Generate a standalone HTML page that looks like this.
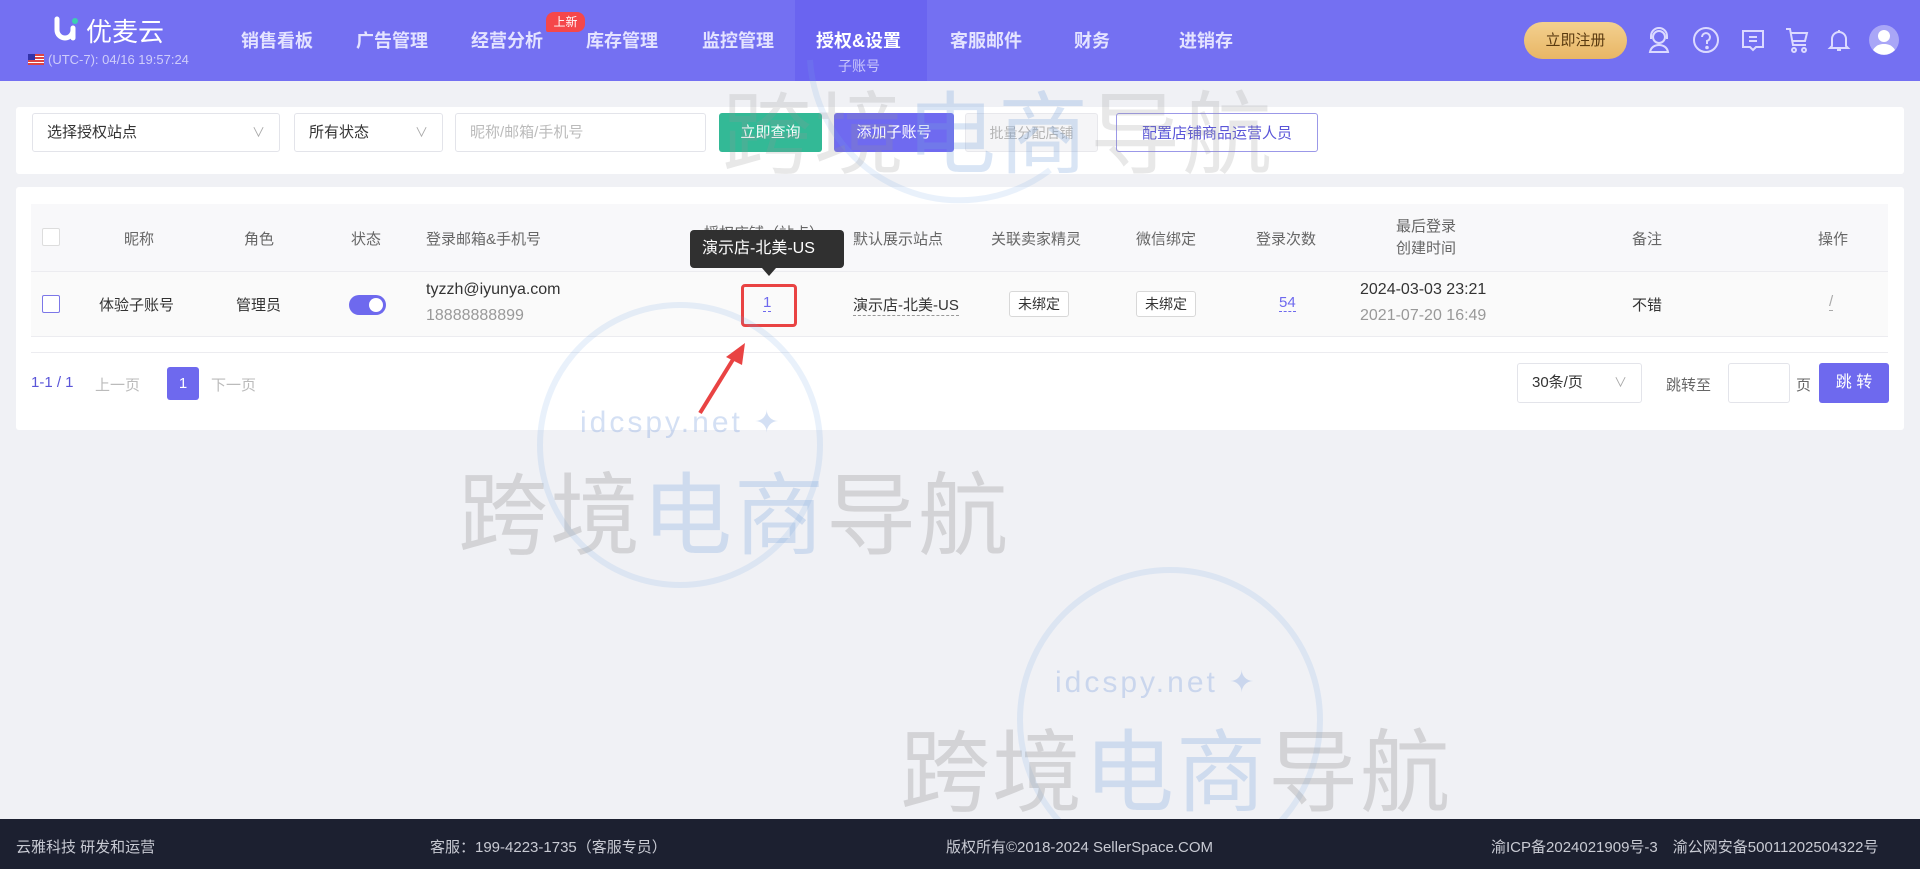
<!DOCTYPE html>
<html><head><meta charset="utf-8"><style>
*{box-sizing:border-box;margin:0;padding:0}
body{width:1920px;height:869px;overflow:hidden;background:#f0f1f5;font-family:"Liberation Sans","Noto Sans CJK SC",sans-serif;position:relative;color:#333}
.abs{position:absolute}
.hdr{left:0;top:0;width:1920px;height:81px;background:#7470f2}
.nav{top:27px;font-size:18px;font-weight:bold;color:#e4e3ff;white-space:nowrap}
.card{background:#fff;border-radius:3px}
.sel{border:1px solid #e3e4ea;border-radius:3px;background:#fff;height:39px;font-size:15px;line-height:37px;padding-left:14px;color:#333}
.sel .ar{position:absolute;right:14px;top:0;color:#aaa;font-size:13px}
.btn{height:39px;border-radius:3px;font-size:15px;line-height:39px;text-align:center;color:#fff}
.th{top:228px;font-size:15px;color:#666;white-space:nowrap}
.td{font-size:15px;color:#333;white-space:nowrap}
.tag{border:1px solid #d8d8d8;border-radius:3px;font-size:14px;line-height:24px;padding:0 8px;background:#fff}
.ft{top:836px;font-size:15px;color:#c8cad3;white-space:nowrap}
.wm{font-size:90px;color:rgba(150,150,150,.32);white-space:nowrap;letter-spacing:2px}
.wm span{color:rgba(120,160,220,.28)}
.ico{top:26px}
</style></head><body>
<div class="abs hdr"></div>
<div class="abs" style="left:795px;top:0;width:132px;height:81px;background:#6a64f0"></div>
<svg class="abs" style="left:53px;top:16px" width="28" height="28" viewBox="0 0 28 28"><path d="M4 3v11a8 8 0 0 0 16 0" stroke="#fff" stroke-width="5" fill="none" stroke-linecap="round"/><circle cx="22" cy="5" r="3" fill="#3ccfb0"/><path d="M20 12v10" stroke="#fff" stroke-width="5" stroke-linecap="round"/></svg>
<div class="abs" style="left:86px;top:12px;font-size:26px;color:#fff">优麦云</div>
<div class="abs" style="left:28px;top:54px;width:16px;height:11px;background:repeating-linear-gradient(#d44 0 2px,#fff 2px 3px)"><div style="width:7px;height:6px;background:#33a"></div></div>
<div class="abs" style="left:48px;top:52px;font-size:13px;color:#cfcdfa">(UTC-7): 04/16 19:57:24</div>
<div class="abs nav" style="left:241px">销售看板</div>
<div class="abs nav" style="left:356px">广告管理</div>
<div class="abs nav" style="left:471px">经营分析</div>
<div class="abs" style="left:546px;top:12px;width:39px;height:20px;background:#f5474a;border-radius:8px 8px 8px 2px;color:#fff;font-size:12px;text-align:center;line-height:20px">上新</div>
<div class="abs nav" style="left:586px">库存管理</div>
<div class="abs nav" style="left:702px">监控管理</div>
<div class="abs nav" style="left:816px;color:#fff">授权&amp;设置</div>
<div class="abs" style="left:838px;top:56px;font-size:14px;color:#c9c6fb">子账号</div>
<div class="abs nav" style="left:950px">客服邮件</div>
<div class="abs nav" style="left:1074px">财务</div>
<div class="abs nav" style="left:1179px">进销存</div>
<div class="abs" style="left:1524px;top:22px;width:103px;height:37px;border-radius:19px;background:linear-gradient(#f3d08f,#e8b665);color:#5a3a10;font-size:15px;text-align:center;line-height:37px">立即注册</div>
<svg class="abs ico" style="left:1645px" width="28" height="28" viewBox="0 0 28 28" fill="none" stroke="#dcdaff" stroke-width="2"><circle cx="14" cy="11" r="6"/><path d="M6 13v-3a8 8 0 0 1 16 0v3M5 26c1-5 5-7 9-7s8 2 9 7z"/></svg>
<svg class="abs ico" style="left:1692px" width="28" height="28" viewBox="0 0 28 28" fill="none" stroke="#dcdaff" stroke-width="2"><circle cx="14" cy="14" r="12"/><path d="M10 11a4 4 0 1 1 5 4v3"/><circle cx="15" cy="21.5" r=".8" fill="#dcdaff"/></svg>
<svg class="abs ico" style="left:1739px" width="28" height="28" viewBox="0 0 28 28" fill="none" stroke="#dcdaff" stroke-width="2"><path d="M4 5h20v16h-7l-3 3-3-3H4z"/><path d="M10 11h8M10 15h8"/></svg>
<svg class="abs ico" style="left:1783px" width="28" height="28" viewBox="0 0 28 28" fill="none" stroke="#dcdaff" stroke-width="2"><path d="M3 3h4l3 16h13M8 7h16l-2 8H9"/><circle cx="11" cy="24" r="2"/><circle cx="21" cy="24" r="2"/></svg>
<svg class="abs ico" style="left:1825px" width="28" height="28" viewBox="0 0 28 28" fill="none" stroke="#dcdaff" stroke-width="2"><path d="M7 20V13a7 7 0 0 1 14 0v7l2 2H5z M12 24h4 M14 4v2"/></svg>
<svg class="abs" style="left:1868px;top:24px" width="32" height="32" viewBox="0 0 32 32"><circle cx="16" cy="16" r="15" fill="#a9a6f7"/><circle cx="16" cy="12" r="6" fill="#fff"/><path d="M5 26c3-5 7-6 11-6s8 1 11 6a15 15 0 0 1-22 0z" fill="#fff"/></svg>

<div class="abs card" style="left:16px;top:107px;width:1888px;height:67px"></div>
<div class="abs sel" style="left:32px;top:113px;width:248px">选择授权站点<span class="ar">∨</span></div>
<div class="abs sel" style="left:294px;top:113px;width:149px">所有状态<span class="ar">∨</span></div>
<div class="abs sel" style="left:455px;top:113px;width:251px;color:#bbb">昵称/邮箱/手机号</div>
<div class="abs btn" style="left:719px;top:113px;width:103px;background:#33b996">立即查询</div>
<div class="abs btn" style="left:834px;top:113px;width:120px;background:#6f6af0">添加子账号</div>
<div class="abs btn" style="left:965px;top:113px;width:133px;background:#f5f5f7;border:1px solid #e8e8ec;color:#b5b5b5;font-size:14px">批量分配店铺</div>
<div class="abs btn" style="left:1116px;top:113px;width:202px;border:1px solid #9b98e8;color:#5a55d8;background:#fff">配置店铺商品运营人员</div>

<div class="abs card" style="left:16px;top:187px;width:1888px;height:243px"></div>
<div class="abs" style="left:31px;top:204px;width:1857px;height:68px;background:#f8f8fa;border-bottom:1px solid #ececf0"></div>
<div class="abs" style="left:31px;top:272px;width:1857px;height:65px;background:#fafafa;border-bottom:1px solid #ececf0"></div>
<div class="abs" style="left:31px;top:352px;width:1857px;height:1px;background:#ececf0"></div>
<div class="abs" style="left:42px;top:228px;width:18px;height:18px;border:1px solid #ddd;border-radius:2px;background:#fff"></div>
<div class="abs th" style="left:124px">昵称</div>
<div class="abs th" style="left:244px">角色</div>
<div class="abs th" style="left:351px">状态</div>
<div class="abs th" style="left:426px">登录邮箱&amp;手机号</div>
<div class="abs th" style="left:704px;top:222px">授权店铺（站点）</div>
<div class="abs th" style="left:853px">默认展示站点</div>
<div class="abs th" style="left:991px">关联卖家精灵</div>
<div class="abs th" style="left:1136px">微信绑定</div>
<div class="abs th" style="left:1256px">登录次数</div>
<div class="abs" style="left:1396px;top:216px;font-size:15px;color:#666;line-height:22px;text-align:center">最后登录<br>创建时间</div>
<div class="abs th" style="left:1632px">备注</div>
<div class="abs th" style="left:1818px">操作</div>

<div class="abs" style="left:42px;top:295px;width:18px;height:18px;border:1px solid #7c77e8;border-radius:2px;background:#fff"></div>
<div class="abs td" style="left:99px;top:294px">体验子账号</div>
<div class="abs td" style="left:236px;top:294px">管理员</div>
<div class="abs" style="left:349px;top:295px;width:37px;height:20px;border-radius:10px;background:#6e69ee"><div style="position:absolute;right:3px;top:3px;width:14px;height:14px;border-radius:7px;background:#fff"></div></div>
<div class="abs td" style="left:426px;top:281px;font-size:16px">tyzzh@iyunya.com</div>
<div class="abs td" style="left:426px;top:307px;color:#999;font-size:16px">18888888899</div>
<div class="abs" style="left:741px;top:284px;width:56px;height:43px;border:3px solid #e94343;border-radius:4px"></div>
<div class="abs td" style="left:763px;top:294px;color:#6e69ee;border-bottom:1px dashed #6e69ee">1</div>
<div class="abs td" style="left:853px;top:294px;border-bottom:1px dashed #999">演示店-北美-US</div>
<div class="abs tag" style="left:1009px;top:291px">未绑定</div>
<div class="abs tag" style="left:1136px;top:291px">未绑定</div>
<div class="abs td" style="left:1279px;top:294px;color:#6e69ee;border-bottom:1px dashed #6e69ee">54</div>
<div class="abs td" style="left:1360px;top:281px;font-size:16px">2024-03-03 23:21</div>
<div class="abs td" style="left:1360px;top:307px;color:#999;font-size:16px">2021-07-20 16:49</div>
<div class="abs td" style="left:1632px;top:294px">不错</div>
<div class="abs td" style="left:1829px;top:293px;color:#aaa;border-bottom:1px dashed #aaa">/</div>

<div class="abs" style="left:690px;top:230px;width:154px;height:38px;background:#303030;border-radius:4px;color:#fff;font-size:16px;line-height:38px;padding-left:12px">演示店-北美-US</div>
<div class="abs" style="left:762px;top:268px;width:0;height:0;border-left:7px solid transparent;border-right:7px solid transparent;border-top:8px solid #303030"></div>
<svg class="abs" style="left:690px;top:335px" width="70" height="85" viewBox="0 0 70 85"><path d="M10 78L47 18" stroke="#e94343" stroke-width="4"/><path d="M55 8L36 22 52 30z" fill="#e94343"/></svg>

<div class="abs" style="left:31px;top:374px;font-size:15px;color:#5a55d8">1-1 / 1</div>
<div class="abs" style="left:95px;top:374px;font-size:15px;color:#bbb">上一页</div>
<div class="abs" style="left:167px;top:367px;width:32px;height:33px;background:#6e69ee;border-radius:3px;color:#fff;font-size:15px;line-height:33px;text-align:center">1</div>
<div class="abs" style="left:211px;top:374px;font-size:15px;color:#bbb">下一页</div>
<div class="abs sel" style="left:1517px;top:363px;width:125px;height:40px;line-height:38px">30条/页<span class="ar">∨</span></div>
<div class="abs" style="left:1666px;top:374px;font-size:15px;color:#666">跳转至</div>
<div class="abs" style="left:1728px;top:363px;width:62px;height:40px;border:1px solid #e3e4ea;border-radius:3px;background:#fff"></div>
<div class="abs" style="left:1796px;top:374px;font-size:15px;color:#666">页</div>
<div class="abs btn" style="left:1819px;top:363px;width:70px;height:40px;line-height:40px;background:#6e69ee;font-size:16px">跳 转</div>

<svg class="abs" style="left:0;top:0" width="1920" height="869"><g fill="none" stroke="rgba(120,165,230,.16)" stroke-width="6"><circle cx="680" cy="445" r="140"/><circle cx="1170" cy="720" r="150"/><path d="M810 60a150 150 0 0 0 240 110"/></g></svg>
<div class="abs wm" style="left:458px;top:443px">跨境<span>电商</span>导航</div>
<div class="abs wm" style="left:900px;top:700px">跨境<span>电商</span>导航</div>
<div class="abs wm" style="left:722px;top:62px;color:rgba(150,150,150,.22)">跨境<span>电商</span>导航</div>
<div class="abs" style="left:580px;top:405px;font-size:30px;color:rgba(120,160,220,.32);letter-spacing:3px">idcspy.net ✦</div>
<div class="abs" style="left:1055px;top:665px;font-size:30px;color:rgba(120,160,220,.32);letter-spacing:3px">idcspy.net ✦</div>

<div class="abs" style="left:0;top:819px;width:1920px;height:50px;background:#1c2030"></div>
<div class="abs ft" style="left:16px">云雅科技 研发和运营</div>
<div class="abs ft" style="left:430px">客服：199-4223-1735（客服专员）</div>
<div class="abs ft" style="left:946px">版权所有©2018-2024 SellerSpace.COM</div>
<div class="abs ft" style="left:1491px">渝ICP备2024021909号-3　渝公网安备50011202504322号</div>
</body></html>
